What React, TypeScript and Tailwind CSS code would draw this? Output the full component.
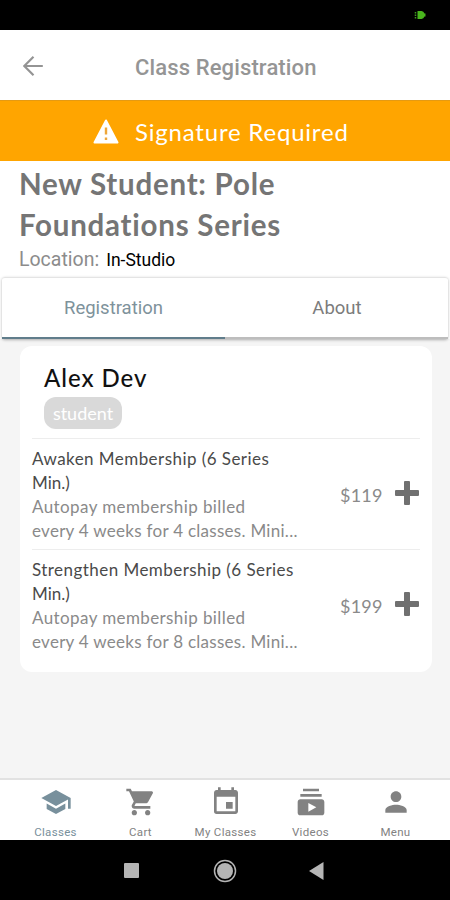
import type { ReactNode } from "react";
import {
  MdEvent,
  MdPerson,
  MdSchool,
  MdShoppingCart,
  MdSubscriptions,
} from "react-icons/md";

type Plan = { title: string; detail: string; price: string };

const plans: Plan[] = [
  {
    title: "Awaken Membership (6 Series",
    detail: "every 4 weeks for 4 classes. Mini...",
    price: "$119",
  },
  {
    title: "Strengthen Membership (6 Series",
    detail: "every 4 weeks for 8 classes. Mini...",
    price: "$199",
  },
];

function PlanRow({ plan }: { plan: Plan }) {
  return (
    <div className="ml-3 mr-3 flex h-[111px] border-t border-[#ededed] pt-2">
      <div className="w-[308px] whitespace-nowrap text-[17px] leading-6 text-[#8a8a8a]">
        <p className="tracking-[0.45px] text-[#4a4a4a]">{plan.title}</p>
        <p className="text-[#4a4a4a]">Min.)</p>
        <p className="tracking-[0.4px]">Autopay membership billed</p>
        <p className="tracking-[0.28px]">{plan.detail}</p>
      </div>
      <div className="flex h-24 flex-1 items-center justify-between">
        <span className="text-[18px] tracking-[0.2px] text-[#8a8a8a]">{plan.price}</span>
        <svg className="-mt-1 mr-px h-6 w-6" viewBox="0 0 24 24" fill="#707070">
          <path d="M10 0h4a1 1 0 0 1 1 1v8h8a1 1 0 0 1 1 1v4a1 1 0 0 1-1 1h-8v8a1 1 0 0 1-1 1h-4a1 1 0 0 1-1-1v-8H1a1 1 0 0 1-1-1v-4a1 1 0 0 1 1-1h8V1a1 1 0 0 1 1-1z" />
        </svg>
      </div>
    </div>
  );
}

function NavItem({ icon, label, active }: { icon: ReactNode; label: string; active?: boolean }) {
  return (
    <div className={`flex w-[85px] flex-col items-center ${active ? "text-[#78909c]" : "text-[#828282]"}`}>
      {icon}
      <span className="mt-[7px] whitespace-nowrap font-[Roboto] text-[11.500px] leading-[14px] tracking-[0.3px]">{label}</span>
    </div>
  );
}

export default function App() {
  return (
    <div className="flex h-[900px] w-[450px] flex-col overflow-hidden bg-[#f5f5f5] font-[Lato,sans-serif]">
      <div className="flex h-[30px] shrink-0 items-center justify-end bg-black pr-6">
        <svg className="h-2 w-3" viewBox="0 0 12 8">
          <path d="M1.500 1v1.500M1.500 3.500v1.500M1.500 6v1.500" stroke="#3f9a1c" strokeWidth="1.500" />
          <path d="M3.500 0h4a3.500 4 0 0 1 3 2.500h1v3h-1A3.500 4 0 0 1 7.500 8h-4z" fill="#49b51d" />
        </svg>
      </div>

      <header className="flex h-[70px] shrink-0 items-center bg-white pl-[23px]">
        <svg className="mt-px h-5 w-5" viewBox="0 0 20 20" fill="none" stroke="#949494" strokeWidth="2.200">
          <path d="M19.800 10H1.500M10.500 0.800L1.300 10l9.200 9.200" />
        </svg>
        <h1 className="ml-[92px] mt-1 whitespace-nowrap font-[Roboto] text-[22px] font-medium tracking-[0.13px] text-[#959595]">
          Class Registration
        </h1>
      </header>

      <div className="flex h-[61px] shrink-0 items-center border-t border-[#e59a12] bg-[#ffa500] pl-[93px] text-white">
        <svg className="h-[25px] w-[26px]" viewBox="0 0 26 25">
          <path d="M13 1.500L24.500 23.500h-23z" fill="white" stroke="white" strokeWidth="2" strokeLinejoin="round" />
          <path d="M13 8.500v7M13 18.500v2.500" stroke="#eea73a" strokeWidth="2.400" />
        </svg>
        <span className="ml-4 mt-px whitespace-nowrap text-[24px] tracking-[0.8px]">Signature Required</span>
      </div>

      <section className="h-[116px] shrink-0 bg-white pl-[19px] pt-[2px]">
        <h2 className="whitespace-nowrap text-[29.500px] font-bold leading-[41px] tracking-[0.750px] text-[#757575]">
          New Student: Pole
          <br />
          Foundations Series
        </h2>
        <p className="mt-[2px] flex items-baseline whitespace-nowrap font-[Roboto] leading-[26px]">
          <span className="text-[19.500px] text-[#8c8c8c]">Location:</span>
          <span className="ml-[7px] text-[17.500px] text-black">In-Studio</span>
        </p>
      </section>

      <div className="bg-white">
        <div className="mx-[2px] flex h-[62px] rounded-[3px] border-t border-[#e4e4e4] font-[Roboto] text-[18.500px] shadow-[0_1px_3px_rgba(0,0,0,0.3)]">
          <div className="flex w-[223px] items-center justify-center border-b-2 border-[#607d8b] pt-[2px] text-[#7e929b]">
            Registration
          </div>
          <div className="flex flex-1 items-center justify-center border-b-2 border-[#bdbdbd] pl-px pt-[2px] text-[#7c7c7c]">
            About
          </div>
        </div>
      </div>

      <main className="flex-1 pt-[7px]">
        <div className="ml-5 h-[326px] w-[412px] rounded-xl bg-white">
          <div className="h-[92px] pl-6 pt-[15px]">
            <h3 className="text-[24px] font-medium leading-[34px] tracking-[0.950px] text-[#111]">Alex Dev</h3>
            <div className="mt-[2px] flex h-8 w-[78px] items-center justify-center rounded-xl bg-[#d9d9d9] text-[18px] text-white">
              student
            </div>
          </div>
          {plans.map((p) => (
            <PlanRow key={p.price} plan={p} />
          ))}
        </div>
      </main>

      <nav className="flex h-[62px] shrink-0 justify-center border-t-2 border-[#e2e2e2] bg-white pl-px pt-[6px]">
        <NavItem active icon={<MdSchool size={32} />} label="Classes" />
        <NavItem icon={<MdShoppingCart size={32} />} label="Cart" />
        <NavItem icon={<MdEvent size={32} />} label="My Classes" />
        <NavItem icon={<MdSubscriptions size={32} />} label="Videos" />
        <NavItem icon={<MdPerson size={32} />} label="Menu" />
      </nav>

      <div className="flex h-[60px] shrink-0 items-center bg-black pl-[124px] pt-px">
        <div className="h-[15px] w-[15px] rounded-[1px] bg-[#b5b5b5]" />
        <svg className="ml-[74px] h-6 w-6" viewBox="0 0 24 24">
          <circle cx="12" cy="12" r="10.500" fill="none" stroke="#b5b5b5" strokeWidth="1.500" />
          <circle cx="12" cy="12" r="8" fill="#b5b5b5" />
        </svg>
        <svg className="ml-[72px] h-[18px] w-[15px]" viewBox="0 0 15 18">
          <path d="M0 9L14.500 0v18z" fill="#b5b5b5" />
        </svg>
      </div>
    </div>
  );
}
